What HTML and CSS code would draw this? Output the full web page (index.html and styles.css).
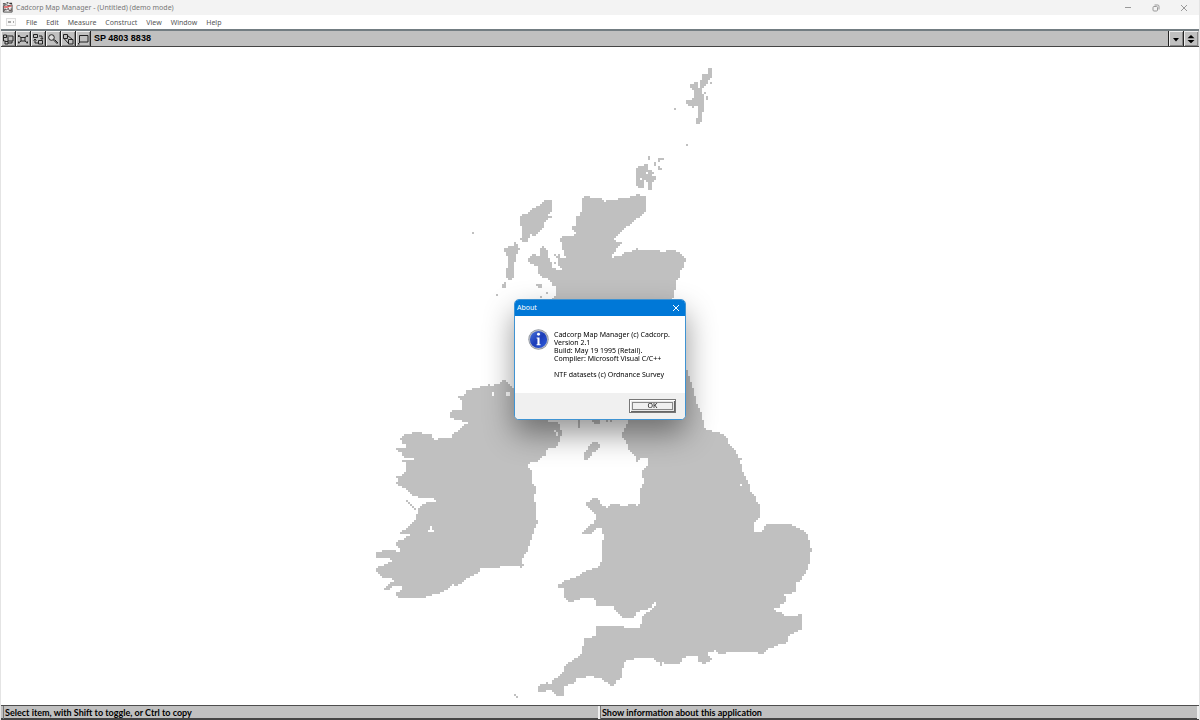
FILE: index.html
```html
<!DOCTYPE html>
<html lang="en">
<head>
<meta charset="utf-8">
<title>Cadcorp Map Manager - (Untitled) (demo mode)</title>
<link rel="stylesheet" href="styles.css">
</head>
<body>
<div class="window">
  <header class="titlebar">
    <svg class="app-icon" viewBox="0 0 12 12" aria-hidden="true">
      <path d="M1.500 4l3-1 3 1 3.500-1v8h-9.500z" fill="#eee" stroke="#444"/>
      <path d="M1 2h3M5 1h2M8 1.500h3" stroke="#333" stroke-width="1.500"/>
      <path d="M2 5.500h4l2-1h2.500" stroke="#d55" stroke-width="1.500" fill="none"/>
      <path d="M3 10V7.500l2 1 2-1.500 1 2.500h2V7" stroke="#443434" fill="none"/>
    </svg>
    <h1 class="title">Cadcorp Map Manager - (Untitled) (demo mode)</h1>
    <div class="caption-buttons">
      <button class="caption-button" type="button" aria-label="Minimize"><svg viewBox="0 0 8 8"><path d="M1 3.500h6"/></svg></button>
      <button class="caption-button" type="button" aria-label="Restore"><svg viewBox="0 0 8 8"><rect x="1" y="2.500" width="4.500" height="4.500" rx="1"/><path d="M2.500 1h3.200q1.300 0 1.300 1.300v3.200"/></svg></button>
      <button class="caption-button" type="button" aria-label="Close"><svg viewBox="0 0 8 8"><path d="M1 1l6 6M7 1l-6 6"/></svg></button>
    </div>
  </header>

  <nav class="menubar">
    <svg class="doc-icon" viewBox="0 0 12 10" aria-hidden="true"><rect x="1.500" y="1.500" width="9" height="7" fill="#fafafa" stroke="#ddd"/><path d="M3 4h3v2H3zM8 4h1v2H8z" fill="#aaa"/></svg>
    <button class="menu" type="button">File</button>
    <button class="menu" type="button">Edit</button>
    <button class="menu" type="button">Measure</button>
    <button class="menu" type="button">Construct</button>
    <button class="menu" type="button">View</button>
    <button class="menu" type="button">Window</button>
    <button class="menu" type="button">Help</button>
  </nav>

  <div class="toolbar">
    <button class="tool" type="button" aria-label="Overview"><svg viewBox="0 0 14 14"><path d="M2.500 3v6h2M2.500 3h3v2.500h-3M6 4h6v5H7V5M4 9.500h3v2.500H4zM7 11h4V9.500"/></svg></button>
    <button class="tool" type="button" aria-label="Zoom to extent"><svg viewBox="0 0 14 14"><rect x="5" y="5.500" width="4" height="3.500"/><path d="M2.500 3.500l2.500 2M11.500 3.500L9 5.500M2.500 11L5 9M11.500 11L9 9M2.500 5V3.500h1M11.500 5V3.500h-1M2.500 9.500V11h1M11.500 9.500V11h-1"/></svg></button>
    <button class="tool" type="button" aria-label="Previous view"><svg viewBox="0 0 14 14"><path d="M2.500 2.500h4v3h-4zM7.500 8.500h4v3.500h-4zM8 4h3v3M9.500 6l1.500 1.500L12 6M4 7v4h3M2.500 8.500L4 7l1.500 1.500"/></svg></button>
    <button class="tool" type="button" aria-label="Zoom"><svg viewBox="0 0 14 14"><circle cx="5.500" cy="5.500" r="2.800" fill="#ddd"/><path d="M7.500 8l4 4M8.500 7.500l3.500 3.500"/></svg></button>
    <button class="tool" type="button" aria-label="Zoom out"><svg viewBox="0 0 14 14"><path d="M2.500 2.500h4v4h-4zM7.500 7.500H12V12H7.500zM6.500 3.500L11.500 7.500M3 6.500L7.500 11.500"/></svg></button>
    <button class="tool" type="button" aria-label="Window view"><svg viewBox="0 0 14 14"><path d="M3.500 3.500h8.500v6.500H3.500zM2 12l2-2M2 12h1.500"/></svg></button>
    <output class="position">SP 4803 8838</output>
    <button class="tool solid" type="button" aria-label="Minimize map"><svg viewBox="0 0 14 14"><path d="M4 6h6L7 9.500z"/></svg></button>
    <button class="tool solid" type="button" aria-label="Restore map"><svg viewBox="0 0 14 14"><path d="M7 3l3.500 3.200h-7zM7 11.200L3.500 8h7z"/></svg></button>
  </div>

  <main class="map">
    <canvas class="chart" width="230" height="324" role="img" aria-label="Map of the British Isles"></canvas>
  </main>

  <footer class="statusbar">
    <div class="status">Select item, with Shift to toggle, or Ctrl to copy</div>
    <div class="status">Show information about this application</div>
  </footer>

  <section class="dialog" role="dialog" aria-labelledby="about-title">
    <div class="dialog-title">
      <h2 class="dialog-heading" id="about-title">About</h2>
      <button class="dialog-close" type="button" aria-label="Close dialog"><svg viewBox="0 0 8 8"><path d="M1 1l6 6M7 1l-6 6"/></svg></button>
    </div>
    <div class="dialog-body">
      <svg class="info" viewBox="0 0 20 20" aria-hidden="true">
        <defs><linearGradient id="blue" x1="0" y1="0" x2="1" y2="1"><stop offset="0" stop-color="#4a74dc"/><stop offset=".5" stop-color="#1c3db8"/><stop offset="1" stop-color="#2f5fe0"/></linearGradient></defs>
        <circle cx="10" cy="10" r="9.700" fill="#8d939c"/>
        <circle cx="10" cy="10" r="9" fill="#b9bdc6"/>
        <circle cx="10" cy="10" r="8.200" fill="url(#blue)"/>
        <circle cx="10" cy="5" r="1.400" fill="#fff"/>
        <path d="M8.200 8h2.800v6.500h1v1H8.200v-1H9V9h-.8z" fill="#fff"/>
      </svg>
      <div class="message">
        <p>Cadcorp Map Manager (c) Cadcorp.<br>Version 2.1<br>Build: May 19 1995 (Retail).<br>Compiler: Microsoft Visual C/C++</p>
        <p>NTF datasets (c) Ordnance Survey</p>
      </div>
    </div>
    <div class="dialog-actions"><button class="ok" type="button">OK</button></div>
  </section>
</div>
<script src="map.js"></script>
</body>
</html>
```
FILE: styles.css
```css
* { box-sizing: border-box; }
body { margin: 0; background: #fff; font-family: "Noto Sans", "Open Sans", sans-serif; font-size: 7px; }
button { margin: 0; padding: 0; border: 0; background: none; font: inherit; color: inherit; }
h1, h2, p { margin: 0; font-size: inherit; font-weight: 400; }
svg { display: block; }

.window { position: relative; display: flex; flex-direction: column; height: 100vh; border-left: 1px solid #e4e4e4; border-right: 1px solid #e4e4e4; overflow: hidden; }

.titlebar { display: flex; align-items: center; height: 15px; padding-left: 1px; background: #f3f3f3; color: #777; }
.app-icon { width: 11px; height: 11px; }
.title { flex: 1; padding-left: 3px; line-height: 15px; }
.caption-buttons { display: flex; }
.caption-button { display: grid; place-items: center; width: 28px; height: 14px; }
.caption-button:last-child { margin-right: 1px; }
.caption-button svg, .dialog-close svg { width: 8px; height: 8px; fill: none; stroke: #999; stroke-width: 1; }

.menubar { display: flex; align-items: center; gap: 9px; height: 14px; padding-left: 4px; color: #555; line-height: 13px; }
.doc-icon { width: 12px; height: 10px; }

.toolbar { display: flex; height: 18px; border-top: 2px solid #737d82; border-bottom: 1px solid #444; background: #c0c0c0; }
.tool { display: grid; place-items: center; width: 15px; height: 15px; border: 1px solid #222; border-width: 0 1px 0 0; box-shadow: inset 1px 1px #eee, inset -1px -1px #888; }
.tool svg { width: 14px; height: 14px; fill: none; stroke: #222; stroke-width: 1; }
.solid { border-width: 0 0 0 1px; }
.solid:last-child { margin-right: 1px; }
.solid svg { fill: #000; stroke: none; }
.position { flex: 1; padding-left: 3px; font: 700 9px/15px "Liberation Sans", Arial, sans-serif; color: #000; }

.map { flex: 1; min-height: 0; display: flex; align-items: center; justify-content: center; overflow: hidden; }
.chart { flex: none; width: 460px; height: 648px; image-rendering: pixelated; }

.statusbar { display: grid; grid-template-columns: 1fr 1fr; height: 15px; border-top: 1px solid #4d4d4d; border-bottom: 2px solid #444; background: #c0c0c0; }
.status { margin-left: 2px; padding-left: 1px; border-left: 1px solid #777; border-right: 2px solid #eee; font: 700 9px/13px Lato, Arial, sans-serif; color: #000; }
.status + .status { margin-left: 0; }

.dialog { position: absolute; inset: 0 0 1px; margin: auto; width: 172px; height: 121px; display: flex; flex-direction: column; border: 1px solid #3f93d2; border-radius: 5px; overflow: hidden; background: #fff; box-shadow: 0 14px 30px rgba(0, 0, 0, .42); }
.dialog-title { display: flex; align-items: center; height: 16px; padding: 0 5px 0 2px; background: #0078d7; color: #fff; }
.dialog-heading { flex: 1; line-height: 16px; }
.dialog-close svg { stroke: #fff; }
.dialog-body { flex: 1; display: flex; gap: 5px; padding: 13px 0 0 13px; }
.info { width: 21px; height: 21px; }
.message { display: flex; flex-direction: column; gap: 8px; padding-top: 2px; line-height: 8px; color: #000; white-space: nowrap; }
.dialog-actions { display: flex; justify-content: flex-end; align-items: center; height: 26px; padding-right: 9px; background: #f0f0f0; }
.ok { width: 47px; height: 14px; border: 1px solid #777; background: #f0f0f0; box-shadow: inset 1px 1px #fff, inset -1px -1px #666, inset 0 0 0 2px #e8e8e8, inset 0 0 0 3px #888; line-height: 12px; }
```
FILE: map.js
```js
// Coastline in map units; each shape is a flat list of x, y pairs.
const land = [
  // Great Britain
  "584 196 590 196 591 199 599 199 601 198 603 201 605 202 607 200 617 200 618 198 629 198 630 196 636 196 638 194 641 196 647 196 645 201 645 212 640 216 633 222 628 226 622 230 617 236 613 241 622 242 619 246 616 249 612 256 609 260 614 257 622 257 625 252 634 251 637 248 639 251 650 250 658 250 662 252 674 250 678 252 682 254 685 259 684 266 680 272 680 277 676 280 675 290 672 300 650 330 680 345 687 372 690 380 692 386 694 393 697 405 700 410 703 420 705 429 713 432 720 433 727 438 729 445 735 450 738 458 743 457 740 462 743 473 747 480 751 487 748 488 754 495 757 502 760 507 759 517 753 523 753 530 757 533 762 533 764 527 768 524 790 524 798 528 806 532 809 540 810 547 812 551 809 554 809 563 806 573 800 580 796 583 795 592 787 594 783 592 785 596 785 603 780 605 778 609 773 607 776 611 782 613 786 617 790 616 802 615 802 629 793 633 787 636 787 643 780 643 773 647 767 649 762 654 757 652 733 651 725 653 719 655 715 649 713 652 705 653 697 656 689 656 682 658 680 663 670 664 662 662 661 667 659 662 652 658 640 657 625 661 623 665 622 677 617 680 615 685 611 686 607 682 600 678 590 676 577 678 574 683 563 686 563 696 557 696 555 693 550 689 544 692 539 692 539 686 547 683 552 684 553 680 558 677 563 672 566 664 574 660 580 655 583 651 584 637 587 638 595 637 597 626 624 626 625 628 641 628 642 617 647 613 654 608 657 601 654 603 650 608 643 610 637 612 635 617 621 617 618 612 615 610 613 605 605 606 595 606 597 602 593 597 581 597 580 599 574 600 573 602 568 602 566 598 563 595 566 589 558 587 559 585 567 580 577 577 583 572 597 568 602 562 603 557 603 547 602 540 605 538 603 534 602 529 598 527 592 533 582 533 588 527 595 522 596 515 590 508 585 505 586 503 590 501 593 497 598 499 600 504 607 508 613 503 617 505 628 506 631 503 635 504 638 508 641 498 639 492 644 483 642 470 647 467 649 457 642 457 637 462 635 455 628 448 627 442 623 437 623 433 627 425 629 419 600 390 560 340 553 298 557 293 555 288 560 283 553 287 551 280 543 277 538 272 538 266 529 263 529 259 534 253 537 257 541 257 541 248 544 246 548 253 549 260 552 262 553 270 561 271 563 268 557 266 559 262 557 257 559 254 561 260 566 257 563 250 562 243 559 238 567 236 577 235 573 230 573 226 577 227 575 217 580 217 582 208 583 200",
  // Lewis and Harris
  "547 200 551 200 551 212 546 217 550 216 545 221 543 227 539 232 535 236 531 234 528 238 526 243 521 240 523 232 520 223 520 216 524 214 528 214 532 208 537 207 542 203",
  // Uists
  "516 242 519 249 516 256 515 262 513 268 514 277 510 280 507 277 506 271 509 263 508 257 505 252 505 248 513 246",
  "505 281 507 286 501 289 502 285",
  // Orkney
  "637 167 643 166 647 164 649 168 647 171 653 171 653 175 650 177 657 177 652 182 643 180 643 188 639 188 636 183 637 175",
  "648 183 652 183 651 190 648 190", "648 156 650 156 651 159 648 159", "658 160 660 158 664 158 662 160 658 162",
  "654 162 656 162 656 166 654 166", "658 166 660 167 662 168 662 170 658 170",
  // Shetland
  "708 68 712 68 712 76 708 80 705 87 702 88 703 96 704 102 703 107 706 108 703 110 702 118 700 124 696 124 696 118 698 117 698 106 692 107 686 103 686 100 694 99 694 90 689 87 690 84 694 84 695 81 697 81 698 88 700 88 700 81 702 80 703 74 708 74",
  // Isle of Man, Isle of Wight
  "595 441 599 443 599 449 593 452 588 460 583 459 585 453 590 445",
  "699 656 705 654 712 658 709 661 704 665 698 660",
  // Southern Hebrides and Galloway
  "537 284 542 284 542 290 540 287 537 287", "578 418 580 418 580 427 578 427", "591 418 599 418 599 424 595 424",
  // Ireland
  "477 388 485 386 490 385 492 388 494 384 500 385 502 380 505 380 507 383 511 386 513 389 530 392 548 422 558 423 562 432 559 440 557 447 547 448 545 455 537 461 528 463 528 467 532 470 532 483 536 487 535 493 533 500 536 505 536 520 538 522 535 527 532 535 530 543 527 552 522 558 523 567 513 566 503 565 497 568 480 568 478 573 467 578 462 583 455 586 452 582 450 587 442 592 435 594 425 597 413 598 397 597 396 593 400 591 406 587 394 586 388 590 382 589 387 587 392 582 397 579 383 578 377 572 377 568 387 564 395 560 388 558 376 558 376 553 385 550 390 550 400 552 401 548 397 547 397 541 405 539 407 537 413 533 399 533 405 530 412 524 417 517 418 508 427 503 436 502 434 497 420 497 412 495 407 490 402 486 395 483 400 480 394 477 400 476 406 472 406 463 401 461 417 461 417 459 403 457 403 452 397 451 397 448 406 448 406 443 402 443 401 438 403 435 410 434 413 432 419 433 431 434 433 438 436 442 441 437 447 439 453 439 452 434 457 432 462 427 469 422 457 420 449 416 452 411 462 410 463 403 459 397 463 396 468 390"
];

const lakes = [
  "505 393 511 391 510 396 505 398", "492 392 494 392 494 397 492 397", "499 398 501 398 501 402 499 402",
  "430 526 432 526 434 532 428 533", "554 430 557 431 558 437 556 437", "644 505 650 505 650 507 644 507",
  "738 482 741 484 744 488 740 487", "524 231 526 231 526 233 524 233", "640 177 642 177 642 180 640 180",
  "645 172 649 172 649 174 645 174"
];

const islets = [
  [472, 233], [497, 294], [674, 108], [687, 144], [706, 96], [706, 98], [710, 82], [704, 92],
  [406, 500], [408, 502], [410, 504], [412, 506], [414, 508], [402, 442], [458, 396],
  [514, 694], [516, 697], [554, 254], [554, 262], [554, 268], [546, 292], [540, 296], [546, 260],
  [550, 216], [696, 655], [606, 420], [610, 420]
];

const ctx = document.querySelector(".chart").getContext("2d", { willReadFrequently: true });
const { width, height } = ctx.canvas;

function fillShape(shape) {
  const n = shape.split(" ").map(Number);
  ctx.beginPath();
  for (let i = 0; i < n.length; i += 2) ctx.lineTo(n[i], n[i + 1]);
  ctx.fill();
}

ctx.setTransform(0.5, 0, 0, 0.5, -185, -26);
ctx.fillStyle = "#c0c0c0";
land.forEach(fillShape);
ctx.globalCompositeOperation = "destination-out";
lakes.forEach(fillShape);
ctx.globalCompositeOperation = "source-over";

// Snap partly covered cells to land or sea.
const cells = ctx.getImageData(0, 0, width, height);
for (let i = 0; i < cells.data.length; i += 4) {
  const solid = cells.data[i + 3] > 90;
  cells.data[i] = cells.data[i + 1] = cells.data[i + 2] = 192;
  cells.data[i + 3] = solid ? 255 : 0;
}
ctx.putImageData(cells, 0, 0);
ctx.resetTransform();
islets.forEach(([x, y]) => ctx.fillRect(Math.floor((x - 370) / 2), Math.floor((y - 52) / 2), 1, 1));
```
